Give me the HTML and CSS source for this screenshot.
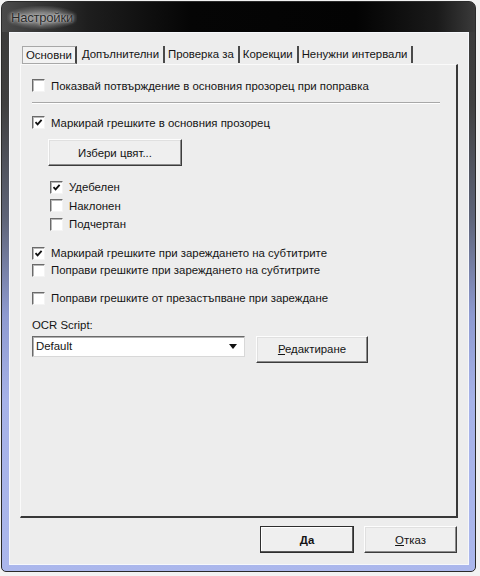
FILE: index.html
```html
<!DOCTYPE html>
<html lang="bg">
<head>
<meta charset="utf-8">
<title>Настройки</title>
<link rel="stylesheet" href="styles.css">
</head>
<body>
<div class="window">
  <div class="titlebar"><span class="title">Настройки</span></div>
  <div class="frame">
    <div class="client">
      <div class="tabs">
        <div class="tab selected">Основни</div>
        <div class="tab">Допълнителни</div>
        <div class="tab">Проверка за</div>
        <div class="tab">Корекции</div>
        <div class="tab">Ненужни интервали</div>
      </div>
      <div class="panel">
        <label class="row r1"><span class="cb"></span>Показвай потвърждение в основния прозорец при поправка</label>
        <div class="sep"></div>
        <label class="row r2"><span class="cb on"><svg viewBox="0 0 9 9"><path d="M1.5 4.2 L3.6 6.4 L7.6 1.8" fill="none" stroke="#111" stroke-width="1.8"/></svg></span>Маркирай грешките в основния прозорец</label>
        <button class="btn color">Избери цвят...</button>
        <div class="sub">
          <label class="row srow"><span class="cb on"><svg viewBox="0 0 9 9"><path d="M1.5 4.2 L3.6 6.4 L7.6 1.8" fill="none" stroke="#111" stroke-width="1.8"/></svg></span>Удебелен</label>
          <label class="row srow"><span class="cb"></span>Наклонен</label>
          <label class="row srow"><span class="cb"></span>Подчертан</label>
        </div>
        <label class="row r3"><span class="cb on"><svg viewBox="0 0 9 9"><path d="M1.5 4.2 L3.6 6.4 L7.6 1.8" fill="none" stroke="#111" stroke-width="1.8"/></svg></span>Маркирай грешките при зареждането на субтитрите</label>
        <label class="row"><span class="cb"></span>Поправи грешките при зареждането на субтитрите</label>
        <label class="row r5"><span class="cb"></span>Поправи грешките от презастъпване при зареждане</label>
        <div class="label">OCR Script:</div>
        <div class="ocr">
          <div class="combo"><span>Default</span><span class="arrow"></span></div>
          <button class="btn edit"><u>Р</u>едактиране</button>
        </div>
      </div>
      <div class="footer">
        <button class="btn ok"><u>Д</u>а</button>
        <button class="btn cancel"><u>О</u>тказ</button>
      </div>
    </div>
  </div>
</div>
</body>
</html>
```

FILE: styles.css
```css
html, body {
  margin: 0;
  padding: 0;
  background: #f2f2f2;
}
body {
  font-family: "Liberation Sans", Arial, sans-serif;
  font-size: 11.4px;
  color: #141414;
}
.window {
  margin: 1px 0 0 1px;
  width: 475px;
  height: 571px;
  box-sizing: border-box;
  border: 1px solid #2a2a2a;
  border-radius: 7px 7px 5px 5px;
  background: linear-gradient(to bottom, #3a3a3a 0%, #404040 18%, #5e6478 38%, #8e9ad0 55%, #a6b2e8 70%, #abb7ec 100%);
  display: flex;
  flex-direction: column;
  overflow: hidden;
}
.titlebar {
  height: 30px;
  flex: none;
  display: flex;
  align-items: center;
  padding-left: 9px;
  background: linear-gradient(to right, #4a4a4a 0%, #1e1e1e 18%, #050505 40%, #030303 75%, #1a1a1a 92%, #3a3a3a 100%);
}
.title {
  font-size: 13px;
  color: #2a2a2a;
  background: radial-gradient(ellipse at center, rgba(150,150,150,0.75) 30%, rgba(120,120,120,0) 75%);
  padding: 4px 4px;
  margin-left: -4px;
  text-shadow: 0 0 4px rgba(220,220,220,0.9), 0 0 2px rgba(210,210,210,0.9);
  letter-spacing: -0.2px;
}
.frame {
  flex: 1;
  padding: 0 6px 6px 7px;
  display: flex;
}
.client {
  flex: 1;
  background: #ededed;
  border: 1px solid #f6f8fc;
  display: flex;
  flex-direction: column;
  padding: 11px 10px 0 10px;
}
.tabs {
  display: flex;
  height: 20px;
  padding-left: 2px;
}
.tab {
  padding: 0 4px 0 3px;
  line-height: 17px;
  height: 17px;
  margin-top: 2px;
  border-right: 2px solid #4a4a4a;
  margin-right: 0;
}
.tab.selected {
  border: 1px solid #a8a8a8;
  border-right: 2px solid #444;
  background: #f2f2f2;
  height: 16px;
  line-height: 16px;
  padding: 0 3px;
  margin-right: 2px;
}
.panel {
  height: 454px;
  box-sizing: border-box;
  border-top: 1px solid #fafafa;
  border-left: 1px solid #fafafa;
  border-right: 2px solid #383838;
  border-bottom: 2px solid #383838;
  display: flex;
  flex-direction: column;
  padding: 12px 0 0 11px;
}
.row {
  display: flex;
  align-items: center;
  height: 17px;
  gap: 6px;
}
.cb {
  width: 11px;
  height: 11px;
  flex: none;
  background: #fff;
  border-top: 1px solid #6a6a6a;
  border-left: 1px solid #6a6a6a;
  border-right: 1px solid #f4f4f4;
  border-bottom: 1px solid #f4f4f4;
  box-shadow: inset 1px 1px 0 #b8b8b8;
  display: flex;
  align-items: center;
  justify-content: center;
}
.cb svg {
  width: 9px;
  height: 9px;
}
.sep {
  margin: 8px 0 0 0;
  width: 408px;
  height: 1px;
  background: #a8a8a8;
  border-bottom: 1px solid #fff;
}
.r2 { margin-top: 10px; }
.btn {
  font-family: "Liberation Sans", Arial, sans-serif;
  font-size: 11.4px;
  color: #141414;
  background: #efefef;
  border-top: 1px solid #fdfdfd;
  border-left: 1px solid #fdfdfd;
  border-right: 1px solid #3c3c3c;
  border-bottom: 1px solid #3c3c3c;
  box-shadow: inset -1px -1px 0 #8c8c8c, inset 1px 1px 0 #e0e0e0;
  padding: 0;
  height: 27px;
  box-sizing: border-box;
}
.btn u { text-decoration: underline; }
.color {
  margin: 8px 0 0 16px;
  width: 134px;
}
.sub {
  margin: 12px 0 0 18px;
  display: flex;
  flex-direction: column;
}
.srow {
  height: 18.5px;
}
.r3 { margin-top: 11px; }
.r5 { margin-top: 11px; }
.label {
  margin-top: 11px;
  height: 15px;
  line-height: 15px;
}
.ocr {
  margin-top: 3px;
  display: flex;
  align-items: flex-start;
  gap: 11px;
}
.combo {
  width: 213px;
  height: 21px;
  box-sizing: border-box;
  background: #fff;
  border-top: 1px solid #6a6a6a;
  border-left: 1px solid #6a6a6a;
  border-right: 1px solid #d8d8d8;
  border-bottom: 1px solid #d8d8d8;
  box-shadow: inset 1px 1px 0 #b0b0b0;
  display: flex;
  align-items: center;
  justify-content: space-between;
  padding: 0 7px 0 3px;
}
.arrow {
  width: 0;
  height: 0;
  border-left: 4px solid transparent;
  border-right: 4px solid transparent;
  border-top: 5px solid #111;
}
.edit {
  width: 112px;
}
.footer {
  display: flex;
  justify-content: flex-end;
  gap: 10px;
  padding: 8px 1px 0 0;
}
.ok {
  width: 94px;
  font-weight: bold;
  border: 1px solid #2e2e2e;
  box-shadow: inset -1px -1px 0 #5a5a5a, inset 1px 1px 0 #fff;
}
.cancel {
  width: 93px;
}
```
